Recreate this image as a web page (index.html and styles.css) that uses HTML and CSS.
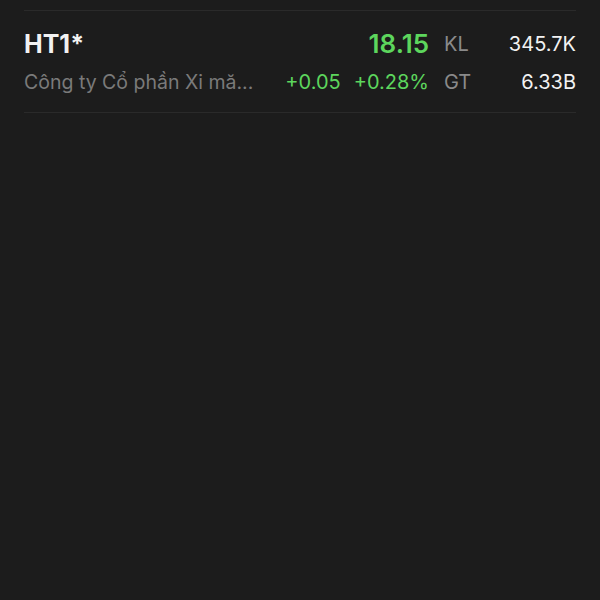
FILE: index.html
```html
<!doctype html>
<html lang="vi">
	<head>
		<meta charset="UTF-8" />
		<meta name="viewport" content="width=device-width, initial-scale=1.0" />
		<title>Danh mục</title>
		<link rel="stylesheet" href="styles.css">
	</head>
	<body>
		<div class="watchlist">
			<div class="stock-row">
				<div class="symbol">HT1*</div>
				<div class="price up">18.15</div>
				<div class="label">KL</div>
				<div class="value">345.7K</div>

				<div class="company">Công ty Cổ phần Xi mă...</div>
				<div class="change up">
					<span>+0.05</span>
					<span>+0.28%</span>
				</div>
				<div class="label">GT</div>
				<div class="value">6.33B</div>
			</div>
		</div>
	</body>
</html>
```

FILE: styles.css
```css
:root {
	--background-color: #1c1c1c;
	--border-color: #2a2a2a;
	--text-color: #f2f2f2;
	--text-secondary: #8a8a8a;
	--text-muted: #7a7a7a;
	--up-color: #5dd65d;
}

html,
body {
	margin: 0;
	height: 100%;
	background-color: var(--background-color);
}

body {
	font-family: Inter, 'Noto Sans', 'Liberation Sans', sans-serif;
	color: var(--text-color);
}

.watchlist {
	padding: 10px 24px 0;
}

.stock-row {
	display: grid;
	grid-template-columns: 1fr auto 75px 72px;
	grid-template-rows: 32px 26px;
	row-gap: 9px;
	align-items: center;
	padding: 17px 0;
	border-top: 1px solid var(--border-color);
	border-bottom: 1px solid var(--border-color);
}

.symbol {
	font-size: 25px;
	font-weight: 700;
	line-height: 32px;
}

.price {
	font-size: 26px;
	font-weight: 600;
	line-height: 32px;
	text-align: right;
}

.company {
	font-size: 19.5px;
	line-height: 26px;
	color: var(--text-muted);
	white-space: nowrap;
}

.change {
	display: flex;
	gap: 13px;
	justify-content: flex-end;
	font-size: 20px;
	line-height: 26px;
}

.up {
	color: var(--up-color);
}

.label {
	padding-left: 15px;
	font-size: 20px;
	line-height: 26px;
	color: var(--text-secondary);
}

.value {
	font-size: 20px;
	line-height: 26px;
	text-align: right;
}
```
